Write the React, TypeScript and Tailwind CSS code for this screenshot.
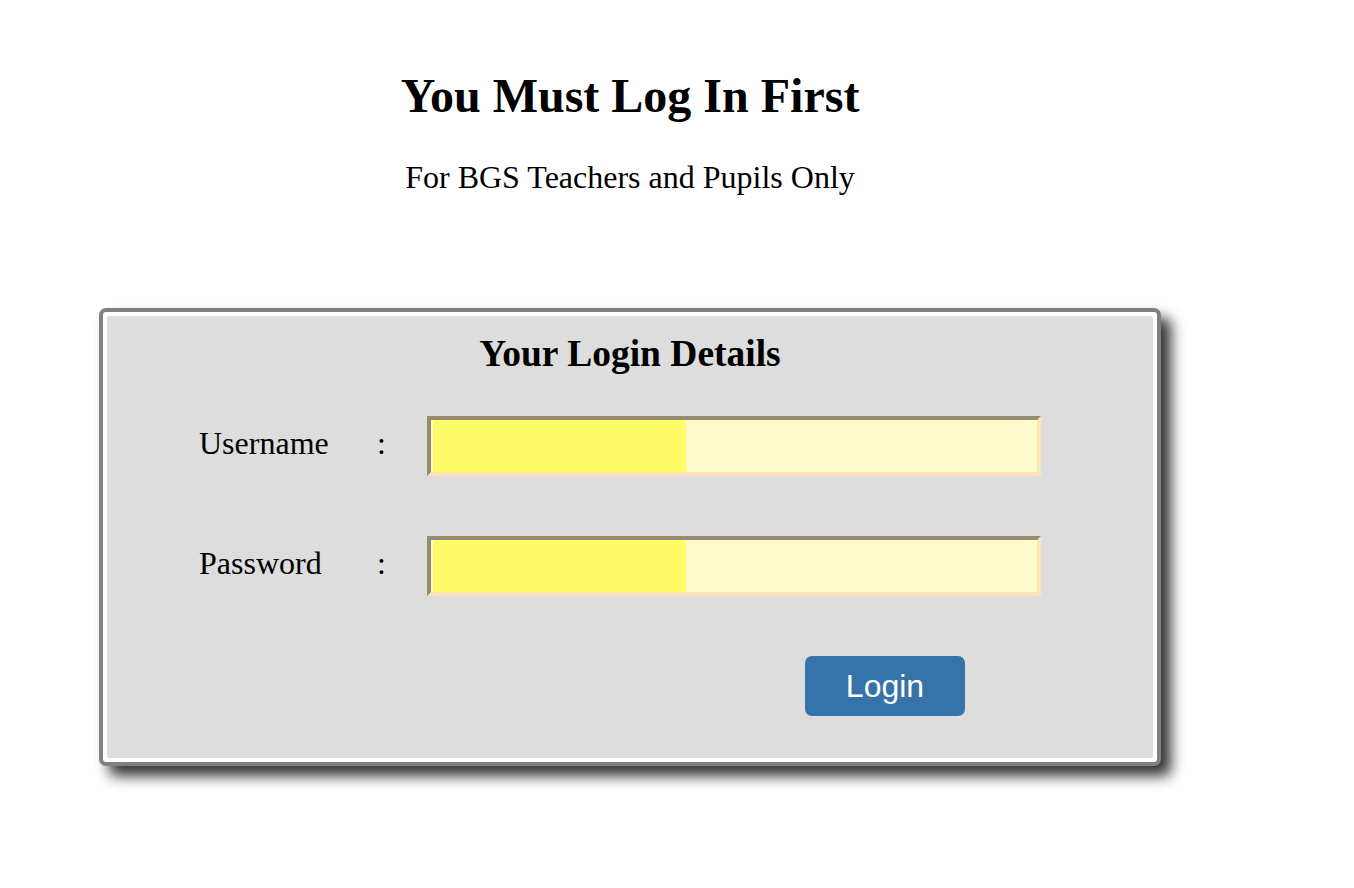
export default function App() {
  return (
    <div className="min-h-screen w-full bg-white">
      <div className="w-[1260px] font-['Liberation_Serif','Times_New_Roman',serif] text-black">
        <h1 className="pt-[72px] text-center text-[48px] font-bold leading-none">You Must Log In First</h1>
        <p className="mt-[41px] text-center text-[32px] leading-none">For BGS Teachers and Pupils Only</p>

        <div className="ml-[99px] mt-[115px] w-[1062px] rounded-[7px] border-4 border-[#808080] bg-white p-1 shadow-[10px_10px_14px_#333]">
          <div className="rounded-[2px] bg-[#dddddd] pb-[42px] pl-[92px] pt-[19px]">
            <h2 className="pr-[92px] text-center text-[37.5px] font-bold leading-none">Your Login Details</h2>

            <div className="mt-[43px] flex flex-col gap-[60px]">
              <div className="flex h-[60px] items-center text-[32px] leading-none">
                <label className="mb-[6px] w-[178px]">Username</label>
                <span className="mb-[6px] w-[50px]">:</span>
                <input
                  type="text"
                  className="h-[60px] w-[614px] border-4 border-t-[#968a73] border-l-[#968a73] border-b-[#ffe4b5] border-r-[#ffe4b5] bg-[linear-gradient(90deg,#fffacb_2px,#fffb66_2px,#fffb66_255px,#fffacb_255px)] outline-none"
                />
              </div>
              <div className="flex h-[60px] items-center text-[32px] leading-none">
                <label className="mb-[6px] w-[178px]">Password</label>
                <span className="mb-[6px] w-[50px]">:</span>
                <input
                  type="password"
                  className="h-[60px] w-[614px] border-4 border-t-[#968a73] border-l-[#968a73] border-b-[#ffe4b5] border-r-[#ffe4b5] bg-[linear-gradient(90deg,#fffacb_2px,#fffb66_2px,#fffb66_255px,#fffacb_255px)] outline-none"
                />
              </div>
              <div className="pl-[606px]">
                <button className="h-[60px] w-[160px] rounded-[7px] bg-[#3573a9] font-['Liberation_Sans',Arial,sans-serif] text-[32px] leading-none text-white">
                  Login
                </button>
              </div>
            </div>
          </div>
        </div>
      </div>
    </div>
  );
}
